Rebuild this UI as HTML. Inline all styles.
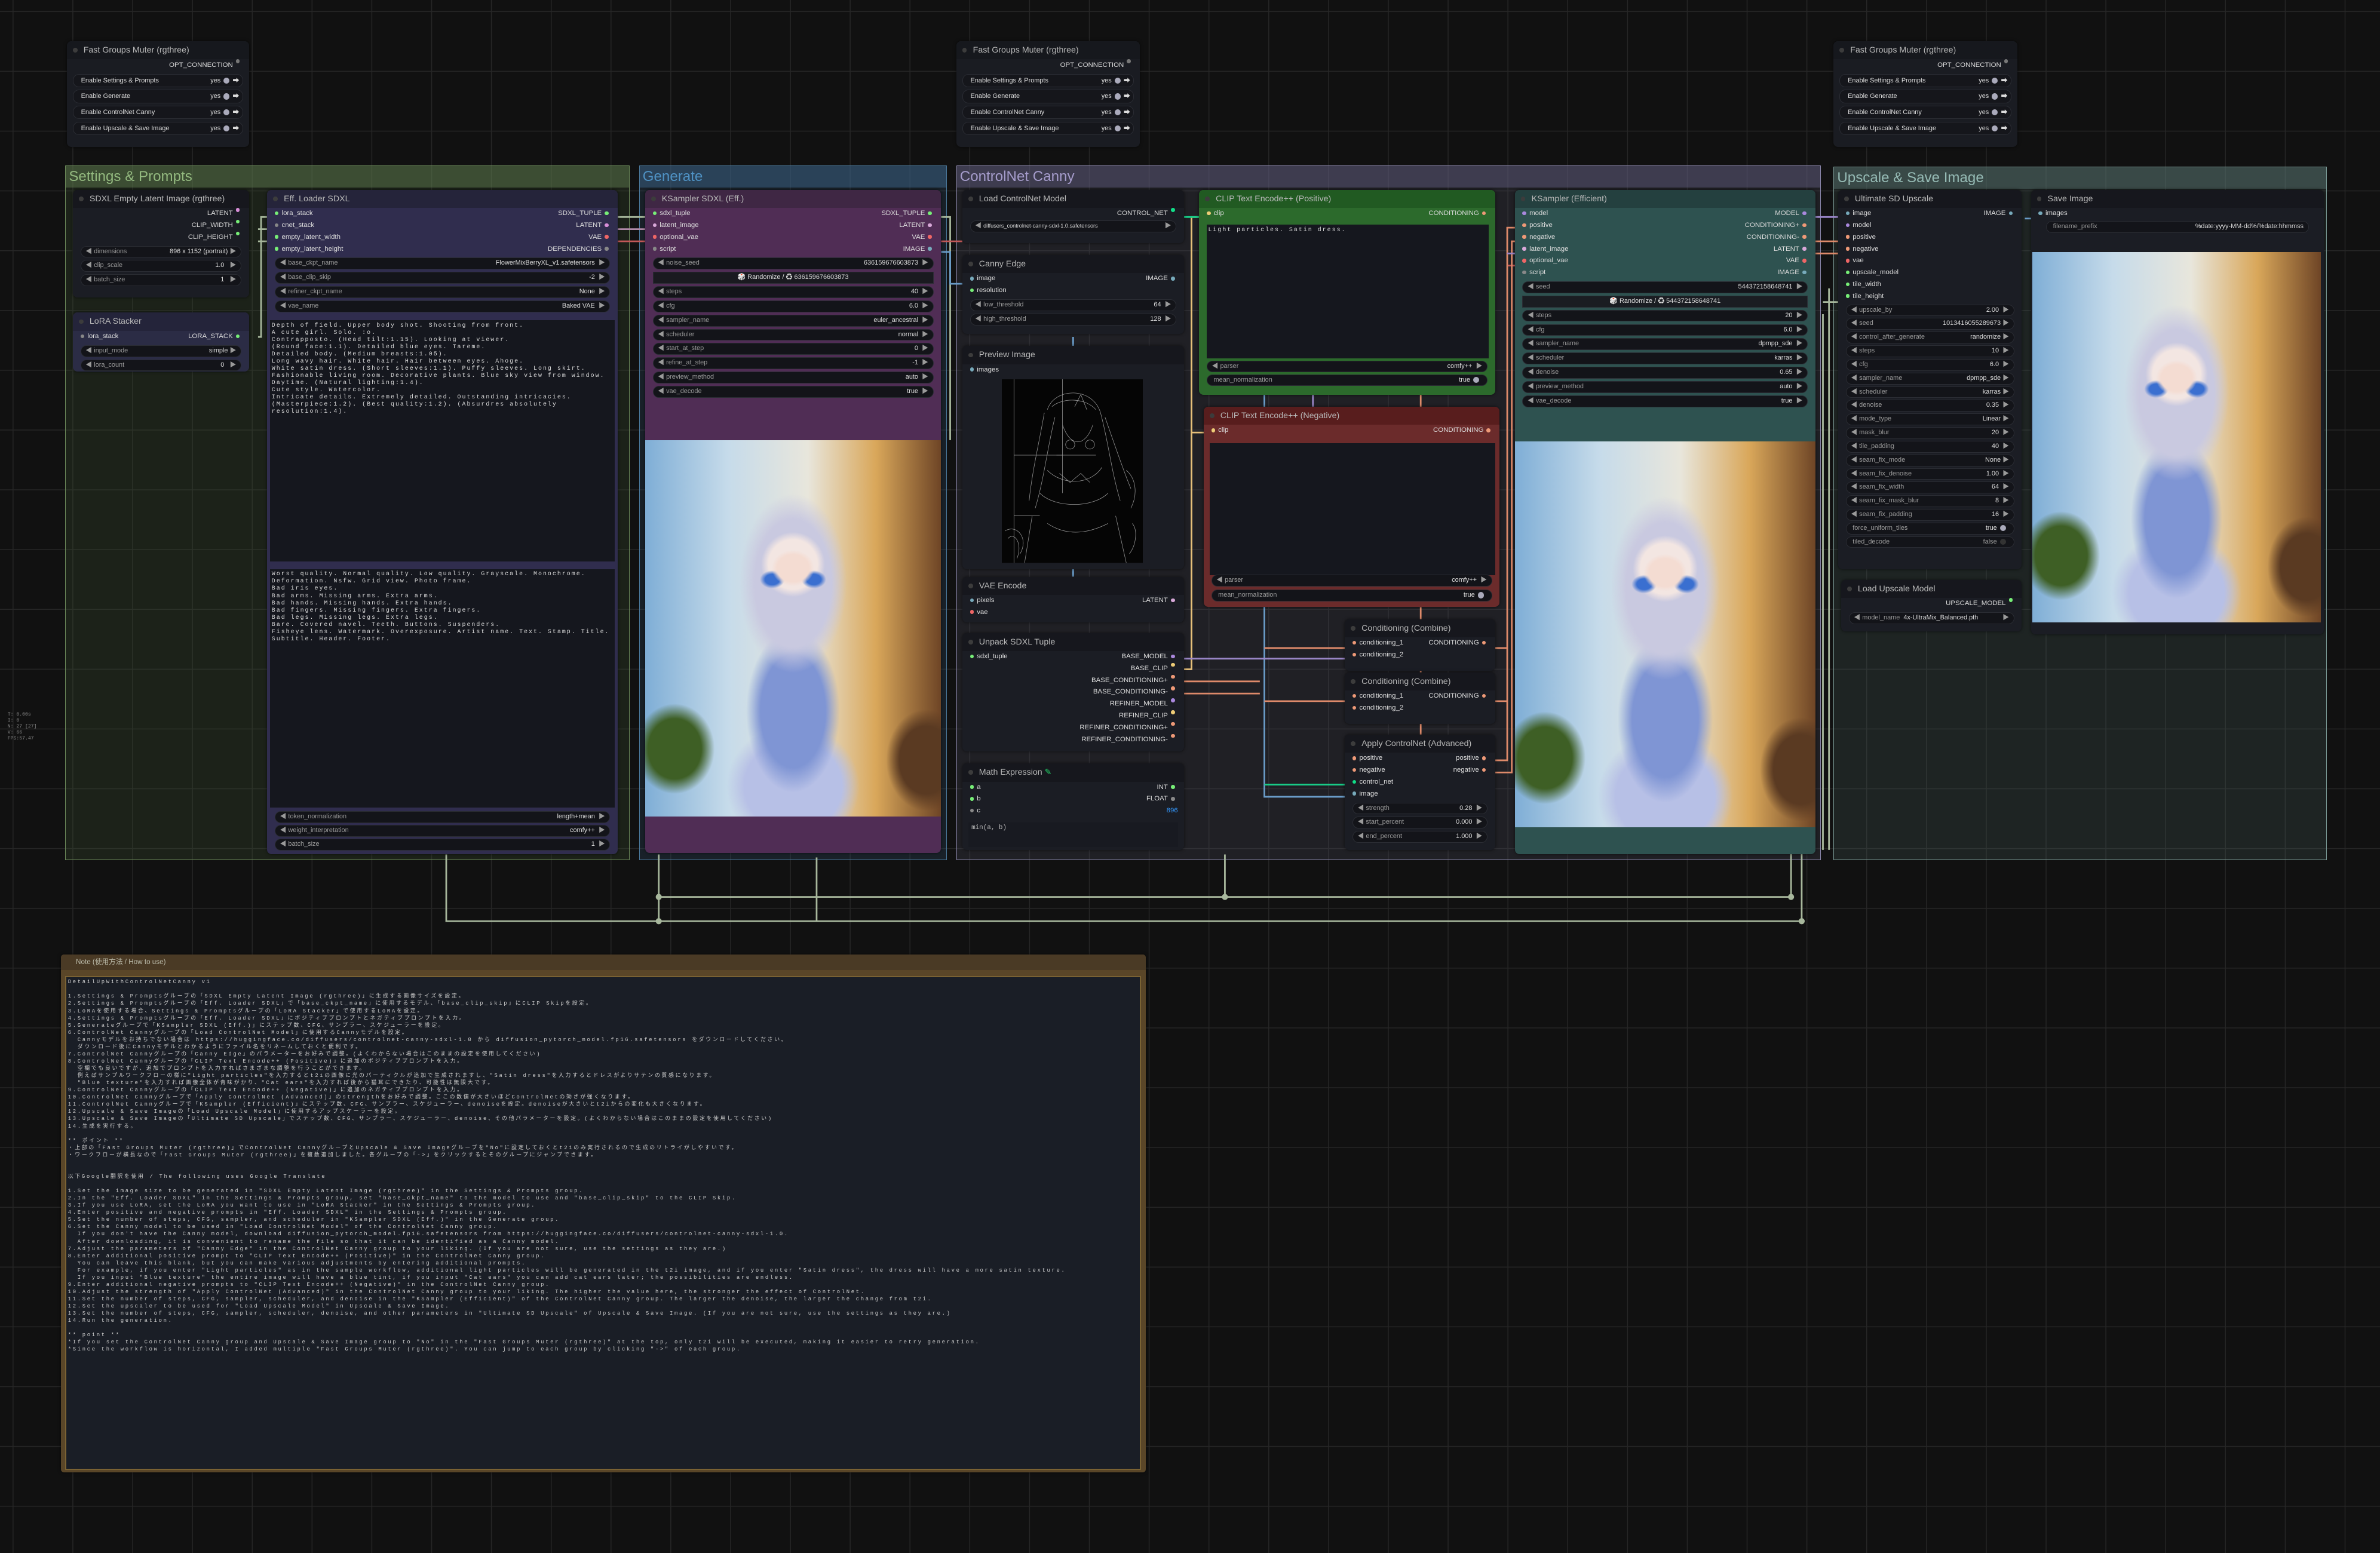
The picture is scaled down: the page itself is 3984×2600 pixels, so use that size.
<!DOCTYPE html>
<html><head><meta charset="utf-8">
<style>
html,body{margin:0;padding:0;width:3984px;height:2600px;overflow:hidden;background:#121212}
#W{zoom:2.5408;position:relative;width:1568px;height:1024px;overflow:hidden;
background-color:#111;
background-image:linear-gradient(90deg,#262626 0.6px,transparent 0.6px),linear-gradient(0deg,#262626 0.6px,transparent 0.6px);
background-size:39.4px 39.4px;background-position:8.3px 7.9px;
font-family:"Liberation Sans","Noto Sans CJK JP",sans-serif}
.g{position:absolute;border:0.6px solid}
.g .gt{height:14px;line-height:14px;font-size:9.5px;padding-left:2px}
.n{position:absolute;background:#1b1d24;border-radius:3px;overflow:hidden;color:#ddd;box-shadow:0 0 2px rgba(0,0,0,.6)}
.h{height:12px;line-height:12px;font-size:5.6px;color:#b8b8b8;padding-left:11px;position:relative;background:rgba(0,0,0,.18);white-space:nowrap}
.h:before{content:"";position:absolute;left:4px;top:4.5px;width:3px;height:3px;border-radius:50%;background:#3c3c3c}
.r{height:7.8px;line-height:7.8px;font-size:4.5px;display:flex;justify-content:space-between;padding:0 4px 0 3px;white-space:nowrap}
.d{display:inline-block;width:2.6px;height:2.6px;border-radius:50%;margin:0 2px;vertical-align:middle;background:#888}
.w{height:7px;line-height:7px;margin:1.6px 5px;border-radius:4px;background:#131419;font-size:4.3px;display:flex;justify-content:space-between;padding:0 3px;color:#9a9a9a;white-space:nowrap;border:0.3px solid #2a2c33}
.w b{color:#ddd;font-weight:normal}
.w .a{color:#ddd;font-size:3.6px}
.ta{position:absolute;background:#15171e;font-family:"Liberation Mono","Noto Sans CJK JP",monospace;font-size:3.9px;line-height:4.75px;color:#ddd;white-space:pre;overflow:hidden;padding:1px}
.img{position:absolute;background:
radial-gradient(ellipse 9% 6% at 50% 34%,#f4dcd2 0 60%,transparent 80%),
radial-gradient(ellipse 7% 4% at 43% 37%,#3a6fd0 0 35%,transparent 60%),
radial-gradient(ellipse 7% 4% at 57% 37%,#3a6fd0 0 35%,transparent 60%),
radial-gradient(ellipse 15% 12% at 50% 33%,#f3e6e2 0 55%,transparent 72%),
radial-gradient(ellipse 26% 34% at 50% 38%,#c9c9e0 0 50%,transparent 70%),
radial-gradient(ellipse 22% 30% at 50% 72%,#7f95d4 0 50%,transparent 72%),
radial-gradient(ellipse 30% 22% at 50% 92%,#b7c0e6 0 55%,transparent 75%),
radial-gradient(ellipse 18% 16% at 10% 82%,#3e5f25 0 50%,transparent 75%),
radial-gradient(ellipse 18% 18% at 95% 85%,#5a3a22 0 50%,transparent 75%),
linear-gradient(90deg,#7faed6 0%,#c6dbea 28%,#e8e6dc 55%,#d9a75a 78%,#6e4526 100%)}
.mut .r2{height:8px;line-height:8px;margin:1.7px 4px;border-radius:4px;background:#15161b;border:0.3px solid #2a2c33;font-size:4.3px;display:flex;justify-content:space-between;padding:0 2px 0 5px;color:#ddd}
.tg{display:inline-block;width:4px;height:4px;border-radius:50%;background:#aab;vertical-align:middle;margin:0 2px}
</style></head><body><div id="W">

<div style="position:absolute;left:5px;top:469px;font-size:3.2px;line-height:4px;color:#888;font-family:'Liberation Mono',monospace">T: 0.00s<br>I: 0<br>N: 27 [27]<br>V: 66<br>FPS:57.47</div>

<div class="n mut" style="left:44px;top:27px;width:120px;height:70px;background:#1a1c22">
<div class="h" style="background:#16181d">Fast Groups Muter (rgthree)</div>
<div class="r" style="justify-content:flex-end;height:8px;line-height:8px">OPT_CONNECTION<i class="d" style="background:#777"></i></div>
<div class="r2"><span>Enable Settings &amp; Prompts</span><span>yes<i class="tg"></i>➡</span></div>
<div class="r2"><span>Enable Generate</span><span>yes<i class="tg"></i>➡</span></div>
<div class="r2"><span>Enable ControlNet Canny</span><span>yes<i class="tg"></i>➡</span></div>
<div class="r2"><span>Enable Upscale &amp; Save Image</span><span>yes<i class="tg"></i>➡</span></div>
</div>
<div class="n mut" style="left:630px;top:27px;width:121px;height:70px;background:#1a1c22">
<div class="h" style="background:#16181d">Fast Groups Muter (rgthree)</div>
<div class="r" style="justify-content:flex-end;height:8px;line-height:8px">OPT_CONNECTION<i class="d" style="background:#777"></i></div>
<div class="r2"><span>Enable Settings &amp; Prompts</span><span>yes<i class="tg"></i>➡</span></div>
<div class="r2"><span>Enable Generate</span><span>yes<i class="tg"></i>➡</span></div>
<div class="r2"><span>Enable ControlNet Canny</span><span>yes<i class="tg"></i>➡</span></div>
<div class="r2"><span>Enable Upscale &amp; Save Image</span><span>yes<i class="tg"></i>➡</span></div>
</div>
<div class="n mut" style="left:1208px;top:27px;width:121px;height:70px;background:#1a1c22">
<div class="h" style="background:#16181d">Fast Groups Muter (rgthree)</div>
<div class="r" style="justify-content:flex-end;height:8px;line-height:8px">OPT_CONNECTION<i class="d" style="background:#777"></i></div>
<div class="r2"><span>Enable Settings &amp; Prompts</span><span>yes<i class="tg"></i>➡</span></div>
<div class="r2"><span>Enable Generate</span><span>yes<i class="tg"></i>➡</span></div>
<div class="r2"><span>Enable ControlNet Canny</span><span>yes<i class="tg"></i>➡</span></div>
<div class="r2"><span>Enable Upscale &amp; Save Image</span><span>yes<i class="tg"></i>➡</span></div>
</div>

<div class="g" style="left:43px;top:109px;width:371px;height:457px;background:rgba(70,95,55,.22);border-color:#6c8a5a">
<div class="gt" style="background:rgba(100,130,85,.45);color:#93b97f">Settings &amp; Prompts</div></div>
<div class="g" style="left:421px;top:109px;width:202px;height:457px;background:rgba(50,85,115,.25);border-color:#4a7799">
<div class="gt" style="background:rgba(60,100,135,.5);color:#4f92c4">Generate</div></div>
<div class="g" style="left:630px;top:109px;width:569px;height:457px;background:rgba(80,78,100,.25);border-color:#8a86aa">
<div class="gt" style="background:rgba(100,95,130,.45);color:#a59ccb">ControlNet Canny</div></div>
<div class="g" style="left:1208px;top:110px;width:324px;height:456px;background:rgba(70,95,92,.25);border-color:#7a9a95">
<div class="gt" style="background:rgba(90,120,115,.45);color:#95bab4">Upscale &amp; Save Image</div></div>

<svg style="position:absolute;left:0;top:0" width="1568" height="1024" fill="none" stroke-width="1.1">
<g stroke="#a7b79c">
<path d="M294 563V607H1187V560"/><path d="M434 591H1180V560"/><path d="M538 565V607"/><path d="M807 563V591"/><path d="M434 563V607"/>
<path d="M407 143H430"/><path d="M620 143H626V290"/><path d="M170 151H176M170 159H176M170 222H172V143H176"/>
<path d="M1205 190V560M1201 199H1212M1201 207V560"/>
</g>
<g fill="#a7b79c"><circle cx="434" cy="591" r="2"/><circle cx="434" cy="607" r="2"/><circle cx="807" cy="591" r="2"/><circle cx="1180" cy="591" r="2"/><circle cx="1187" cy="607" r="2"/></g>
<path stroke="#b08aa8" d="M407 151H430"/><path stroke="#c25858" d="M407 159H430M620 159H634M993 175H1004"/>
<path stroke="#e6c07a" d="M780 441H785V143H795M785 285H795"/>
<path stroke="#6a9cc8" d="M620 166H626V187H638M707 222V228M707 370V380M833 144V525H890M1334 144H1346"/>
<path stroke="#18d08a" d="M780 143H790M833 517H890"/>
<path stroke="#de8a6a" d="M780 449H830M780 457H830M833 427H890M833 462H890M985 427H993M985 462H993M985 501H993V150H1004M985 509H996V159H1004M936 260V268M936 400V408M936 442V443M936 477V484M1196 159H1212M1196 167H1212"/>
<path stroke="#9a86c8" d="M780 434H890M1196 143H1212M993 167H1004M865 260V268"/>
</svg>

<div class="n" style="left:48px;top:125px;width:116px;height:71px">
<div class="h">SDXL Empty Latent Image (rgthree)</div>
<div class="r" style="justify-content:flex-end">LATENT<i class="d" style="background:#d88ed8"></i></div>
<div class="r" style="justify-content:flex-end">CLIP_WIDTH<i class="d" style="background:#7e7"></i></div>
<div class="r" style="justify-content:flex-end">CLIP_HEIGHT<i class="d" style="background:#7e7"></i></div>
<div class="w"><span>◀ dimensions</span><span><b>896 x 1152 (portrait)</b> ▶</span></div>
<div class="w"><span>◀ clip_scale</span><span><b>1.0</b> &nbsp; ▶</span></div>
<div class="w"><span>◀ batch_size</span><span><b>1</b> &nbsp; ▶</span></div>
</div>
<div class="n" style="left:48px;top:206px;width:116px;height:39px;background:#2b2c45">
<div class="h" style="background:#24243a">LoRA Stacker</div>
<div class="r"><span><i class="d" style="background:#888"></i>lora_stack</span><span>LORA_STACK<i class="d" style="background:#7e7"></i></span></div>
<div class="w"><span>◀ input_mode</span><span><b>simple</b> ▶</span></div>
<div class="w"><span>◀ lora_count</span><span><b>0</b> &nbsp; ▶</span></div>
</div>
<div class="n" style="left:176px;top:125px;width:231px;height:438px;background:#302d4e">
<div class="h" style="background:#25243a">Eff. Loader SDXL</div>
<div class="r"><span><i class="d" style="background:#7e7"></i>lora_stack</span><span>SDXL_TUPLE<i class="d" style="background:#7e7"></i></span></div>
<div class="r"><span><i class="d" style="background:#888"></i>cnet_stack</span><span>LATENT<i class="d" style="background:#d88ed8"></i></span></div>
<div class="r"><span><i class="d" style="background:#7e7"></i>empty_latent_width</span><span>VAE<i class="d" style="background:#e66"></i></span></div>
<div class="r"><span><i class="d" style="background:#7e7"></i>empty_latent_height</span><span>DEPENDENCIES<i class="d" style="background:#888"></i></span></div>
<div class="w"><span>◀ base_ckpt_name</span><span><b>FlowerMixBerryXL_v1.safetensors</b> &nbsp;▶</span></div>
<div class="w"><span>◀ base_clip_skip</span><span><b>-2</b> &nbsp;▶</span></div>
<div class="w"><span>◀ refiner_ckpt_name</span><span><b>None</b> &nbsp;▶</span></div>
<div class="w"><span>◀ vae_name</span><span><b>Baked VAE</b> &nbsp;▶</span></div>
<div class="ta" style="left:2px;top:86px;width:225px;height:157px;letter-spacing:0.8px">Depth of field. Upper body shot. Shooting from front.
A cute girl. Solo. :o.
Contrapposto. (Head tilt:1.15). Looking at viewer.
(Round face:1.1). Detailed blue eyes. Tareme.
Detailed body. (Medium breasts:1.05).
Long wavy hair. White hair. Hair between eyes. Ahoge.
White satin dress. (Short sleeves:1.1). Puffy sleeves. Long skirt.
Fashionable living room. Decorative plants. Blue sky view from window.
Daytime. (Natural lighting:1.4).
Cute style. Watercolor.
Intricate details. Extremely detailed. Outstanding intricacies.
(Masterpiece:1.2). (Best quality:1.2). (Absurdres absolutely
resolution:1.4).</div>
<div class="ta" style="left:2px;top:250px;width:225px;height:155px;letter-spacing:0.8px">Worst quality. Normal quality. Low quality. Grayscale. Monochrome.
Deformation. Nsfw. Grid view. Photo frame.
Bad iris eyes.
Bad arms. Missing arms. Extra arms.
Bad hands. Missing hands. Extra hands.
Bad fingers. Missing fingers. Extra fingers.
Bad legs. Missing legs. Extra legs.
Bare. Covered navel. Teeth. Buttons. Suspenders.
Fisheye lens. Watermark. Overexposure. Artist name. Text. Stamp. Title.
Subtitle. Header. Footer.</div>
<div class="w" style="position:absolute;left:0;right:0;top:408px"><span>◀ token_normalization</span><span><b>length+mean</b> &nbsp;▶</span></div>
<div class="w" style="position:absolute;left:0;right:0;top:417px"><span>◀ weight_interpretation</span><span><b>comfy++</b> &nbsp;▶</span></div>
<div class="w" style="position:absolute;left:0;right:0;top:426px"><span>◀ batch_size</span><span><b>1</b> &nbsp;▶</span></div>
</div>

<div class="n" style="left:425px;top:125px;width:195px;height:437px;background:#502d55">
<div class="h" style="background:#3f2744">KSampler SDXL (Eff.)</div>
<div class="r"><span><i class="d" style="background:#7e7"></i>sdxl_tuple</span><span>SDXL_TUPLE<i class="d" style="background:#7e7"></i></span></div>
<div class="r"><span><i class="d" style="background:#d8a8d8"></i>latent_image</span><span>LATENT<i class="d" style="background:#d8a8d8"></i></span></div>
<div class="r"><span><i class="d" style="background:#e66"></i>optional_vae</span><span>VAE<i class="d" style="background:#e66"></i></span></div>
<div class="r"><span><i class="d" style="background:#888"></i>script</span><span>IMAGE<i class="d" style="background:#7ab"></i></span></div>
<div class="w"><span>◀ noise_seed</span><span><b>636159676603873</b> &nbsp;▶</span></div>
<div class="w" style="justify-content:center;border-radius:0;background:#1a1a20"><b>🎲 Randomize / ♻ 636159676603873</b></div>
<div class="w"><span>◀ steps</span><span><b>40</b> &nbsp;▶</span></div>
<div class="w"><span>◀ cfg</span><span><b>6.0</b> &nbsp;▶</span></div>
<div class="w"><span>◀ sampler_name</span><span><b>euler_ancestral</b> &nbsp;▶</span></div>
<div class="w"><span>◀ scheduler</span><span><b>normal</b> &nbsp;▶</span></div>
<div class="w"><span>◀ start_at_step</span><span><b>0</b> &nbsp;▶</span></div>
<div class="w"><span>◀ refine_at_step</span><span><b>-1</b> &nbsp;▶</span></div>
<div class="w"><span>◀ preview_method</span><span><b>auto</b> &nbsp;▶</span></div>
<div class="w"><span>◀ vae_decode</span><span><b>true</b> &nbsp;▶</span></div>
<div class="img" style="left:0;top:165px;width:195px;height:248px"></div>
</div>

<div class="n" style="left:634px;top:125px;width:146px;height:35px">
<div class="h">Load ControlNet Model</div>
<div class="r" style="justify-content:flex-end">CONTROL_NET<i class="d" style="background:#1d8"></i></div>
<div class="w" style="margin-top:0.5px"><span>◀ <b class="a">diffusers_controlnet-canny-sdxl-1.0.safetensors</b></span><span>▶</span></div>
</div>
<div class="n" style="left:634px;top:168px;width:146px;height:52px">
<div class="h">Canny Edge</div>
<div class="r"><span><i class="d" style="background:#7ab"></i>image</span><span>IMAGE<i class="d" style="background:#7ab"></i></span></div>
<div class="r"><span><i class="d" style="background:#7e7"></i>resolution</span><span></span></div>
<div class="w"><span>◀ low_threshold</span><span><b>64</b> &nbsp;▶</span></div>
<div class="w"><span>◀ high_threshold</span><span><b>128</b> &nbsp;▶</span></div>
</div>
<div class="n" style="left:634px;top:228px;width:146px;height:147px">
<div class="h">Preview Image</div>
<div class="r"><span><i class="d" style="background:#7ab"></i>images</span><span></span></div>
<svg style="position:absolute;left:26px;top:22px" width="93" height="121" viewBox="0 0 93 121" stroke="#999" stroke-width="0.3" fill="none">
<rect width="93" height="121" fill="#050505" stroke="none"/>
<path d="M8 0V121M40 0V75M8 50H40M8 90H25"/>
<path d="M30 20C35 5 60 5 65 22C70 40 72 60 78 80M35 25C30 45 28 65 22 85M40 30C45 45 55 45 60 30M36 50H62M30 60C40 70 58 70 66 58M25 75C35 85 60 85 70 75M20 90L15 121M75 90L82 121M30 95C45 105 60 100 70 95"/>
<path d="M28 22C25 40 20 60 18 80M68 25C75 45 80 60 85 72M33 18C40 12 55 12 62 20M38 62L45 68L52 62L58 68"/>
<path d="M48 18L52 10L56 20M45 40A3 3 0 1 0 45.1 40M58 40A3 3 0 1 0 58.1 40"/>
<path d="M2 100C10 95 18 105 12 115M82 60C88 65 90 75 85 85M4 105C8 100 14 108 10 118M86 95C90 100 88 110 84 115"/>
</svg>
</div>
<div class="n" style="left:634px;top:380px;width:146px;height:30px">
<div class="h">VAE Encode</div>
<div class="r"><span><i class="d" style="background:#7ab"></i>pixels</span><span>LATENT<i class="d" style="background:#d8a8d8"></i></span></div>
<div class="r"><span><i class="d" style="background:#e66"></i>vae</span><span></span></div>
</div>
<div class="n" style="left:634px;top:417px;width:146px;height:78px">
<div class="h">Unpack SDXL Tuple</div>
<div class="r" style="height:7.8px"><span><i class="d" style="background:#7e7"></i>sdxl_tuple</span><span>BASE_MODEL<i class="d" style="background:#a8d"></i></span></div>
<div class="r" style="justify-content:flex-end">BASE_CLIP<i class="d" style="background:#ec7"></i></div>
<div class="r" style="justify-content:flex-end">BASE_CONDITIONING+<i class="d" style="background:#e97"></i></div>
<div class="r" style="justify-content:flex-end">BASE_CONDITIONING-<i class="d" style="background:#e97"></i></div>
<div class="r" style="justify-content:flex-end">REFINER_MODEL<i class="d" style="background:#a8d"></i></div>
<div class="r" style="justify-content:flex-end">REFINER_CLIP<i class="d" style="background:#ec7"></i></div>
<div class="r" style="justify-content:flex-end">REFINER_CONDITIONING+<i class="d" style="background:#e97"></i></div>
<div class="r" style="justify-content:flex-end">REFINER_CONDITIONING-<i class="d" style="background:#e97"></i></div>
</div>
<div class="n" style="left:634px;top:503px;width:146px;height:57px">
<div class="h">Math Expression <span style="color:#2c6">✎</span></div>
<div class="r"><span><i class="d" style="background:#7e7"></i>a</span><span>INT<i class="d" style="background:#7e7"></i></span></div>
<div class="r"><span><i class="d" style="background:#7e7"></i>b</span><span>FLOAT<i class="d" style="background:#888"></i></span></div>
<div class="r"><span><i class="d" style="background:#888"></i>c</span><span style="color:#39f">896</span></div>
<div class="ta" style="left:4px;top:39px;width:134px;height:14px;background:#181a21;color:#bbb;font-size:4.3px;padding:1px 2px">min(a, b)</div>
</div>

<div class="n" style="left:790px;top:125px;width:195px;height:135px;background:#2c6a2c">
<div class="h" style="background:#215a22">CLIP Text Encode++ (Positive)</div>
<div class="r"><span><i class="d" style="background:#ec7"></i>clip</span><span>CONDITIONING<i class="d" style="background:#e97"></i></span></div>
<div class="ta" style="left:5px;top:23px;width:184px;height:86px;letter-spacing:0.8px">Light particles. Satin dress.</div>
<div class="w" style="position:absolute;left:0;right:0;top:111px"><span>◀ parser</span><span><b>comfy++</b> &nbsp;▶</span></div>
<div class="w" style="position:absolute;left:0;right:0;top:120px"><span>&nbsp;mean_normalization</span><span><b>true</b><i class="tg"></i></span></div>
</div>
<div class="n" style="left:793px;top:268px;width:195px;height:132px;background:#6b2b2b">
<div class="h" style="background:#581d1d">CLIP Text Encode++ (Negative)</div>
<div class="r"><span><i class="d" style="background:#ec7"></i>clip</span><span>CONDITIONING<i class="d" style="background:#e97"></i></span></div>
<div class="ta" style="left:4px;top:24px;width:186px;height:85px"></div>
<div class="w" style="position:absolute;left:0;right:0;top:109px"><span>◀ parser</span><span><b>comfy++</b> &nbsp;▶</span></div>
<div class="w" style="position:absolute;left:0;right:0;top:119px"><span>&nbsp;mean_normalization</span><span><b>true</b><i class="tg"></i></span></div>
</div>
<div class="n" style="left:886px;top:408px;width:99px;height:34px">
<div class="h">Conditioning (Combine)</div>
<div class="r"><span><i class="d" style="background:#e97"></i>conditioning_1</span><span>CONDITIONING<i class="d" style="background:#e97"></i></span></div>
<div class="r"><span><i class="d" style="background:#e97"></i>conditioning_2</span><span></span></div>
</div>
<div class="n" style="left:886px;top:443px;width:99px;height:34px">
<div class="h">Conditioning (Combine)</div>
<div class="r"><span><i class="d" style="background:#e97"></i>conditioning_1</span><span>CONDITIONING<i class="d" style="background:#e97"></i></span></div>
<div class="r"><span><i class="d" style="background:#e97"></i>conditioning_2</span><span></span></div>
</div>
<div class="n" style="left:886px;top:484px;width:99px;height:76px">
<div class="h">Apply ControlNet (Advanced)</div>
<div class="r"><span><i class="d" style="background:#e97"></i>positive</span><span>positive<i class="d" style="background:#e97"></i></span></div>
<div class="r"><span><i class="d" style="background:#e97"></i>negative</span><span>negative<i class="d" style="background:#e97"></i></span></div>
<div class="r"><span><i class="d" style="background:#1d8"></i>control_net</span><span></span></div>
<div class="r"><span><i class="d" style="background:#7ab"></i>image</span><span></span></div>
<div class="w"><span>◀ strength</span><span><b>0.28</b> &nbsp;▶</span></div>
<div class="w"><span>◀ start_percent</span><span><b>0.000</b> &nbsp;▶</span></div>
<div class="w"><span>◀ end_percent</span><span><b>1.000</b> &nbsp;▶</span></div>
</div>

<div class="n" style="left:998px;top:125px;width:198px;height:438px;background:#2e5250">
<div class="h" style="background:#24403f">KSampler (Efficient)</div>
<div class="r"><span><i class="d" style="background:#a8d"></i>model</span><span>MODEL<i class="d" style="background:#a8d"></i></span></div>
<div class="r"><span><i class="d" style="background:#e97"></i>positive</span><span>CONDITIONING+<i class="d" style="background:#e97"></i></span></div>
<div class="r"><span><i class="d" style="background:#e97"></i>negative</span><span>CONDITIONING-<i class="d" style="background:#e97"></i></span></div>
<div class="r"><span><i class="d" style="background:#d8a8d8"></i>latent_image</span><span>LATENT<i class="d" style="background:#d8a8d8"></i></span></div>
<div class="r"><span><i class="d" style="background:#e66"></i>optional_vae</span><span>VAE<i class="d" style="background:#e66"></i></span></div>
<div class="r"><span><i class="d" style="background:#888"></i>script</span><span>IMAGE<i class="d" style="background:#7ab"></i></span></div>
<div class="w"><span>◀ seed</span><span><b>544372158648741</b> &nbsp;▶</span></div>
<div class="w" style="justify-content:center;border-radius:0;background:#1a1d22"><b>🎲 Randomize / ♻ 544372158648741</b></div>
<div class="w"><span>◀ steps</span><span><b>20</b> &nbsp;▶</span></div>
<div class="w"><span>◀ cfg</span><span><b>6.0</b> &nbsp;▶</span></div>
<div class="w"><span>◀ sampler_name</span><span><b>dpmpp_sde</b> &nbsp;▶</span></div>
<div class="w"><span>◀ scheduler</span><span><b>karras</b> &nbsp;▶</span></div>
<div class="w"><span>◀ denoise</span><span><b>0.65</b> &nbsp;▶</span></div>
<div class="w"><span>◀ preview_method</span><span><b>auto</b> &nbsp;▶</span></div>
<div class="w"><span>◀ vae_decode</span><span><b>true</b> &nbsp;▶</span></div>
<div class="img" style="left:0;top:166px;width:198px;height:254px"></div>
</div>

<div class="n" style="left:1211px;top:125px;width:121px;height:250px">
<div class="h">Ultimate SD Upscale</div>
<div class="r" style="height:7.8px"><span><i class="d" style="background:#7ab"></i>image</span><span>IMAGE<i class="d" style="background:#7ab"></i></span></div>
<div class="r"><span><i class="d" style="background:#a8d"></i>model</span></div>
<div class="r"><span><i class="d" style="background:#e97"></i>positive</span></div>
<div class="r"><span><i class="d" style="background:#e97"></i>negative</span></div>
<div class="r"><span><i class="d" style="background:#e66"></i>vae</span></div>
<div class="r"><span><i class="d" style="background:#7e7"></i>upscale_model</span></div>
<div class="r"><span><i class="d" style="background:#7e7"></i>tile_width</span></div>
<div class="r"><span><i class="d" style="background:#7e7"></i>tile_height</span></div>
<div class="w" style="margin:1.2px 5px"><span>◀ upscale_by</span><span><b>2.00</b> &nbsp;▶</span></div>
<div class="w" style="margin:1.2px 5px"><span>◀ seed</span><span><b>1013416055289673</b> ▶</span></div>
<div class="w" style="margin:1.2px 5px"><span>◀ control_after_generate</span><span><b>randomize</b> ▶</span></div>
<div class="w" style="margin:1.2px 5px"><span>◀ steps</span><span><b>10</b> &nbsp;▶</span></div>
<div class="w" style="margin:1.2px 5px"><span>◀ cfg</span><span><b>6.0</b> &nbsp;▶</span></div>
<div class="w" style="margin:1.2px 5px"><span>◀ sampler_name</span><span><b>dpmpp_sde</b> ▶</span></div>
<div class="w" style="margin:1.2px 5px"><span>◀ scheduler</span><span><b>karras</b> ▶</span></div>
<div class="w" style="margin:1.2px 5px"><span>◀ denoise</span><span><b>0.35</b> &nbsp;▶</span></div>
<div class="w" style="margin:1.2px 5px"><span>◀ mode_type</span><span><b>Linear</b> ▶</span></div>
<div class="w" style="margin:1.2px 5px"><span>◀ mask_blur</span><span><b>20</b> &nbsp;▶</span></div>
<div class="w" style="margin:1.2px 5px"><span>◀ tile_padding</span><span><b>40</b> &nbsp;▶</span></div>
<div class="w" style="margin:1.2px 5px"><span>◀ seam_fix_mode</span><span><b>None</b> ▶</span></div>
<div class="w" style="margin:1.2px 5px"><span>◀ seam_fix_denoise</span><span><b>1.00</b> &nbsp;▶</span></div>
<div class="w" style="margin:1.2px 5px"><span>◀ seam_fix_width</span><span><b>64</b> &nbsp;▶</span></div>
<div class="w" style="margin:1.2px 5px"><span>◀ seam_fix_mask_blur</span><span><b>8</b> &nbsp;▶</span></div>
<div class="w" style="margin:1.2px 5px"><span>◀ seam_fix_padding</span><span><b>16</b> &nbsp;▶</span></div>
<div class="w" style="margin:1.2px 5px"><span>&nbsp;force_uniform_tiles</span><span><b>true</b><i class="tg"></i></span></div>
<div class="w" style="margin:1.2px 5px"><span>&nbsp;tiled_decode</span><span>false<i class="tg" style="background:#333"></i></span></div>
</div>
<div class="n" style="left:1213px;top:382px;width:119px;height:34px">
<div class="h">Load Upscale Model</div>
<div class="r" style="justify-content:flex-end">UPSCALE_MODEL<i class="d" style="background:#7e7"></i></div>
<div class="w"><span>◀ model_name &nbsp;<b>4x-UltraMix_Balanced.pth</b></span><span>▶</span></div>
</div>
<div class="n" style="left:1338px;top:125px;width:193px;height:293px">
<div class="h">Save Image</div>
<div class="r"><span><i class="d" style="background:#7ab"></i>images</span></div>
<div class="w" style="margin:1px 10px"><span>&nbsp;filename_prefix</span><span><b>%date:yyyy-MM-dd%/%date:hhmmss</b></span></div>
<div class="img" style="left:1px;top:41px;width:190px;height:244px"></div>
</div>

<div class="n" style="left:40px;top:629px;width:715px;height:341px;background:#5a4628;border-radius:2px">
<div style="height:10px;line-height:10px;font-size:4.6px;color:#bba;padding-left:10px;background:#4a3a25">Note (使用方法 / How to use)</div>
<div class="ta" style="left:3px;top:14px;width:705px;height:322px;background:#1a1e26;border:1px solid #7a6233;font-size:3.5px;line-height:4.75px;letter-spacing:1.05px;color:#ccc">DetailUpWithControlNetCanny v1

1.Settings &amp; Promptsグループの「SDXL Empty Latent Image (rgthree)」に生成する画像サイズを設定。
2.Settings &amp; Promptsグループの「Eff. Loader SDXL」で「base_ckpt_name」に使用するモデル、「base_clip_skip」にCLIP Skipを設定。
3.LoRAを使用する場合、Settings &amp; Promptsグループの「LoRA Stacker」で使用するLoRAを設定。
4.Settings &amp; Promptsグループの「Eff. Loader SDXL」にポジティブプロンプトとネガティブプロンプトを入力。
5.Generateグループで「KSampler SDXL (Eff.)」にステップ数、CFG、サンプラー、スケジューラーを設定。
6.ControlNet Cannyグループの「Load ControlNet Model」に使用するCannyモデルを設定。
  Cannyモデルをお持ちでない場合は https://huggingface.co/diffusers/controlnet-canny-sdxl-1.0 から diffusion_pytorch_model.fp16.safetensors をダウンロードしてください。
  ダウンロード後にCannyモデルとわかるようにファイル名をリネームしておくと便利です。
7.ControlNet Cannyグループの「Canny Edge」のパラメーターをお好みで調整。(よくわからない場合はこのままの設定を使用してください)
8.ControlNet Cannyグループの「CLIP Text Encode++ (Positive)」に追加のポジティブプロンプトを入力。
  空欄でも良いですが、追加でプロンプトを入力すればさまざまな調整を行うことができます。
  例えばサンプルワークフローの様に"Light particles"を入力するとt2iの画像に光のパーティクルが追加で生成されますし、"Satin dress"を入力するとドレスがよりサテンの質感になります。
  "Blue texture"を入力すれば画像全体が青味がかり、"Cat ears"を入力すれば後から猫耳にできたり、可能性は無限大です。
9.ControlNet Cannyグループの「CLIP Text Encode++ (Negative)」に追加のネガティブプロンプトを入力。
10.ControlNet Cannyグループで「Apply ControlNet (Advanced)」のstrengthをお好みで調整。ここの数値が大きいほどControlNetの効きが強くなります。
11.ControlNet Cannyグループで「KSampler (Efficient)」にステップ数、CFG、サンプラー、スケジューラー、denoiseを設定。denoiseが大きいとt2iからの変化も大きくなります。
12.Upscale &amp; Save Imageの「Load Upscale Model」に使用するアップスケーラーを設定。
13.Upscale &amp; Save Imageの「Ultimate SD Upscale」でステップ数、CFG、サンプラー、スケジューラー、denoise、その他パラメーターを設定。(よくわからない場合はこのままの設定を使用してください)
14.生成を実行する。

** ポイント **
・上部の「Fast Groups Muter (rgthree)」でControlNet CannyグループとUpscale &amp; Save Imageグループを"No"に設定しておくとt2iのみ実行されるので生成のリトライがしやすいです。
・ワークフローが横長なので「Fast Groups Muter (rgthree)」を複数追加しました。各グループの「-&gt;」をクリックするとそのグループにジャンプできます。


以下Google翻訳を使用 / The following uses Google Translate

1.Set the image size to be generated in "SDXL Empty Latent Image (rgthree)" in the Settings &amp; Prompts group.
2.In the "Eff. Loader SDXL" in the Settings &amp; Prompts group, set "base_ckpt_name" to the model to use and "base_clip_skip" to the CLIP Skip.
3.If you use LoRA, set the LoRA you want to use in "LoRA Stacker" in the Settings &amp; Prompts group.
4.Enter positive and negative prompts in "Eff. Loader SDXL" in the Settings &amp; Prompts group.
5.Set the number of steps, CFG, sampler, and scheduler in "KSampler SDXL (Eff.)" in the Generate group.
6.Set the Canny model to be used in "Load ControlNet Model" of the ControlNet Canny group.
  If you don't have the Canny model, download diffusion_pytorch_model.fp16.safetensors from https://huggingface.co/diffusers/controlnet-canny-sdxl-1.0.
  After downloading, it is convenient to rename the file so that it can be identified as a Canny model.
7.Adjust the parameters of "Canny Edge" in the ControlNet Canny group to your liking. (If you are not sure, use the settings as they are.)
8.Enter additional positive prompt to "CLIP Text Encode++ (Positive)" in the ControlNet Canny group.
  You can leave this blank, but you can make various adjustments by entering additional prompts.
  For example, if you enter "Light particles" as in the sample workflow, additional light particles will be generated in the t2i image, and if you enter "Satin dress", the dress will have a more satin texture.
  If you input "Blue texture" the entire image will have a blue tint, if you input "Cat ears" you can add cat ears later; the possibilities are endless.
9.Enter additional negative prompts to "CLIP Text Encode++ (Negative)" in the ControlNet Canny group.
10.Adjust the strength of "Apply ControlNet (Advanced)" in the ControlNet Canny group to your liking. The higher the value here, the stronger the effect of ControlNet.
11.Set the number of steps, CFG, sampler, scheduler, and denoise in the "KSampler (Efficient)" of the ControlNet Canny group. The larger the denoise, the larger the change from t2i.
12.Set the upscaler to be used for "Load Upscale Model" in Upscale &amp; Save Image.
13.Set the number of steps, CFG, sampler, scheduler, denoise, and other parameters in "Ultimate SD Upscale" of Upscale &amp; Save Image. (If you are not sure, use the settings as they are.)
14.Run the generation.

** point **
*If you set the ControlNet Canny group and Upscale &amp; Save Image group to "No" in the "Fast Groups Muter (rgthree)" at the top, only t2i will be executed, making it easier to retry generation.
*Since the workflow is horizontal, I added multiple "Fast Groups Muter (rgthree)". You can jump to each group by clicking "-&gt;" of each group.</div>
</div>

</div></body></html>
